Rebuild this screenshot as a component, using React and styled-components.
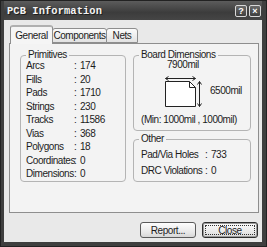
import styled, { createGlobalStyle } from 'styled-components';

const GlobalStyle = createGlobalStyle`
  html, body {
    margin: 0;
    padding: 0;
    background: #3d3d3d;
  }
  * {
    box-sizing: border-box;
  }
`;

const Window = styled.div`
  width: 267px;
  height: 247px;
  display: flex;
  flex-direction: column;
  padding: 0 4px 4px 3px;
  background: #3f3f3f;
  border: 1px solid #222;
  font-family: "Liberation Sans", "DejaVu Sans", sans-serif;
  font-size: 10px;
  letter-spacing: -0.45px;
  color: #1c1c1c;
`;

const TitleBar = styled.div`
  height: 19px;
  display: flex;
  align-items: center;
  justify-content: space-between;
  padding: 0 1px 0 3px;
  background: linear-gradient(#5c5c5c, #3c3c3c 60%, #454545);
`;

const Title = styled.span`
  font-family: "Liberation Mono", "DejaVu Sans Mono", monospace;
  font-weight: bold;
  font-size: 10.4px;
  color: #f4f4f4;
  text-shadow: 1px 1px 0 #1e1e1e;
  letter-spacing: 0.1px;
`;

const TitleButtons = styled.div`
  display: flex;
  gap: 2px;
`;

const TitleButton = styled.div`
  width: 12px;
  height: 12px;
  border: 1px solid #d8d8d8;
  border-radius: 2px;
  background: linear-gradient(#6a6a6a, #3e3e3e);
  color: #fff;
  font-family: "Liberation Sans", sans-serif;
  font-weight: bold;
  font-size: 9px;
  line-height: 10px;
  text-align: center;
  letter-spacing: 0;
`;

const Body = styled.div`
  flex: 1;
  display: flex;
  flex-direction: column;
  background: #e9e9e9;
  padding: 5px 3px 0 5px;
`;

const Tabs = styled.div`
  display: flex;
  align-items: flex-end;
  padding-left: 1px;
  height: 18px;
`;

const Tab = styled.div`
  width: ${(p) => p.$w}px;
  height: ${(p) => (p.$active ? '19px' : '15px')};
  margin-bottom: ${(p) => (p.$active ? '-1px' : '0')};
  display: flex;
  align-items: center;
  justify-content: center;
  background: ${(p) => (p.$active ? '#f5f5f5' : 'linear-gradient(#fbfbfb, #e2e2e2)')};
  border: 1px solid #8e8e8e;
  border-bottom: ${(p) => (p.$active ? 'none' : '1px solid #8e8e8e')};
  border-radius: 3px 3px 0 0;
  border-top: ${(p) => (p.$active ? '2px solid #b0b0b0' : '1px solid #8e8e8e')};
  margin-left: ${(p) => (p.$first ? '0' : '-1px')};
  position: relative;
  z-index: ${(p) => (p.$active ? 2 : 1)};
  white-space: nowrap;
`;

const Panel = styled.div`
  height: 170px;
  background: #f3f3f3;
  border: 1px solid #8e8e8e;
  display: grid;
  grid-template-columns: 106px 118px;
  column-gap: 7px;
  padding: 6px 0 0 10px;
  position: relative;
  z-index: 1;
`;

const Group = styled.fieldset`
  margin: 0;
  height: ${(p) => p.$h}px;
  border: 1px solid #b4b4b4;
  border-radius: 4px;
  padding: 0 0 0 5px;
  min-width: 0;
`;

const Legend = styled.legend`
  padding: 0 2px;
  line-height: 10px;
`;

const Column = styled.div`
  display: flex;
  flex-direction: column;
  gap: 3px;
`;

const StatGrid = styled.div`
  display: grid;
  grid-template-columns: ${(p) => p.$label}px 6px auto;
  grid-auto-rows: ${(p) => p.$row}px;
  align-items: center;
  margin-top: ${(p) => p.$top}px;
  padding-left: ${(p) => p.$indent || 0}px;
  white-space: nowrap;
`;

const Diagram = styled.div`
  display: grid;
  grid-template-columns: 40px auto;
  grid-template-areas:
    'w .'
    'b h';
  margin: 0 0 0 24px;
`;

const WidthLabel = styled.div`
  grid-area: w;
  line-height: 10px;
  padding-left: 4px;
`;

const HeightLabel = styled.div`
  grid-area: h;
  align-self: center;
  margin: 2px 0 0 7px;
`;

const BoardArt = styled.svg`
  grid-area: b;
  display: block;
  margin-top: 5px;
`;

const MinText = styled.div`
  margin-top: 7px;
  line-height: 10px;
  padding-left: 2px;
  white-space: nowrap;
`;

const Footer = styled.div`
  display: flex;
  justify-content: flex-end;
  gap: 6px;
  padding: 9px 1px 0 0;
`;

const Button = styled.button`
  width: 56px;
  height: 16px;
  padding: 0;
  font: inherit;
  letter-spacing: inherit;
  color: #1c1c1c;
  background: linear-gradient(#fdfdfd, #e6e6e6 70%, #d6d6d6);
  border: 1px solid ${(p) => (p.$default ? '#2e2e2e' : '#5a5a5a')};
  border-radius: 3px;
  box-shadow: ${(p) => (p.$default ? 'inset 0 0 0 1px #9a9a9a' : 'none')};
  position: relative;
  &::after {
    content: '';
    display: ${(p) => (p.$default ? 'block' : 'none')};
    position: absolute;
    inset: 2px;
    border: 1px dotted #333;
  }
`;

const primitives = [
  ['Arcs', 174],
  ['Fills', 20],
  ['Pads', 1710],
  ['Strings', 230],
  ['Tracks', 11586],
  ['Vias', 368],
  ['Polygons', 18],
  ['Coordinates', 0],
  ['Dimensions', 0],
];

const others = [
  ['Pad/Via Holes', 733],
  ['DRC Violations', 0],
];

function Stats({ rows, label, row, top, indent }) {
  return (
    <StatGrid $label={label} $row={row} $top={top} $indent={indent}>
      {rows.map(([name, value]) => [
        <span key={name + 'n'}>{name}</span>,
        <span key={name + 'c'}>:</span>,
        <span key={name + 'v'}>{value}</span>,
      ])}
    </StatGrid>
  );
}

function Board() {
  return (
    <BoardArt width="40" height="33" viewBox="0 0 40 33">
      <path d="M2.5 6.5 H26.5 L32.5 12.5 V31.5 H2.5 Z" fill="#fff" stroke="#222" />
      <path d="M26.5 6.5 V12.5 H32.5" fill="none" stroke="#222" />
      <path d="M2.5 3.5 H32.5" stroke="#222" />
      <path d="M5.5 1.5 L2.5 3.5 L5.5 5.5 M29.5 1.5 L32.5 3.5 L29.5 5.5" fill="none" stroke="#222" />
      <path d="M36.5 6.5 V31.5" stroke="#222" />
      <path d="M34.5 9.5 L36.5 6.5 L38.5 9.5 M34.5 28.5 L36.5 31.5 L38.5 28.5" fill="none" stroke="#222" />
    </BoardArt>
  );
}

export default function App() {
  return (
    <>
      <GlobalStyle />
      <Window>
        <TitleBar>
          <Title>PCB Information</Title>
          <TitleButtons>
            <TitleButton>?</TitleButton>
            <TitleButton>×</TitleButton>
          </TitleButtons>
        </TitleBar>
        <Body>
          <Tabs>
            <Tab $active $first $w={43}>General</Tab>
            <Tab $w={55}>Components</Tab>
            <Tab $w={32}>Nets</Tab>
          </Tabs>
          <Panel>
            <Group $h={132}>
              <Legend>Primitives</Legend>
              <Stats rows={primitives} label={48} row={13.5} top={-1} />
            </Group>
            <Column>
              <Group $h={81}>
                <Legend>Board Dimensions</Legend>
                <Diagram>
                  <WidthLabel>7900mil</WidthLabel>
                  <Board />
                  <HeightLabel>6500mil</HeightLabel>
                </Diagram>
                <MinText>(Min: 1000mil , 1000mil)</MinText>
              </Group>
              <Group $h={48}>
                <Legend>Other</Legend>
                <Stats rows={others} label={64} row={16} top={2} indent={2} />
              </Group>
            </Column>
          </Panel>
          <Footer>
            <Button>Report...</Button>
            <Button $default>Close</Button>
          </Footer>
        </Body>
      </Window>
    </>
  );
}
